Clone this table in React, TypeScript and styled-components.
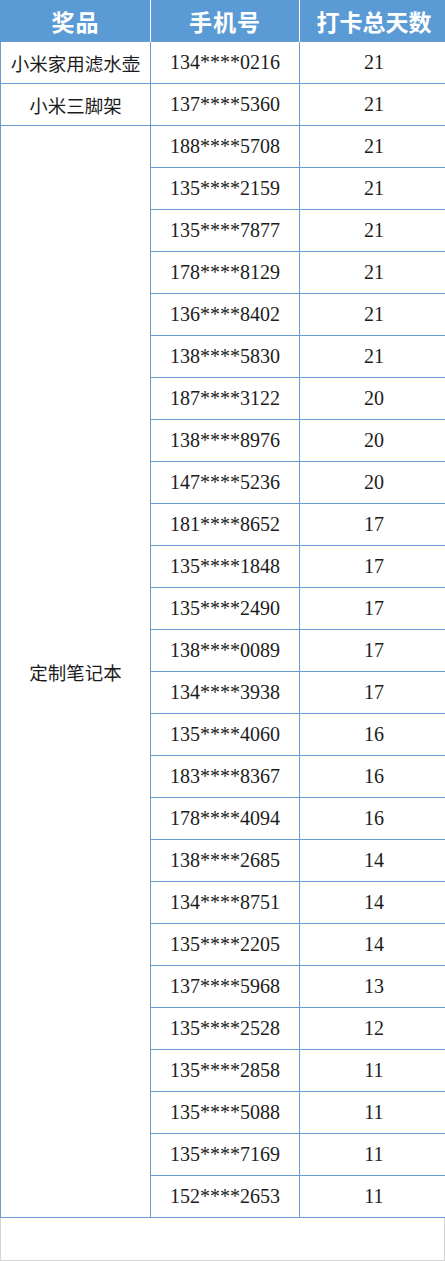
import React from "react";
import styled, { createGlobalStyle } from "styled-components";

type Winner = {
  phone: string;
  days: number;
};

type PrizeGroup = {
  prize: string;
  winners: Winner[];
};

const groups: PrizeGroup[] = [
  { prize: "小米家用滤水壶", winners: [{ phone: "134****0216", days: 21 }] },
  { prize: "小米三脚架", winners: [{ phone: "137****5360", days: 21 }] },
  {
    prize: "定制笔记本",
    winners: [
      { phone: "188****5708", days: 21 },
      { phone: "135****2159", days: 21 },
      { phone: "135****7877", days: 21 },
      { phone: "178****8129", days: 21 },
      { phone: "136****8402", days: 21 },
      { phone: "138****5830", days: 21 },
      { phone: "187****3122", days: 20 },
      { phone: "138****8976", days: 20 },
      { phone: "147****5236", days: 20 },
      { phone: "181****8652", days: 17 },
      { phone: "135****1848", days: 17 },
      { phone: "135****2490", days: 17 },
      { phone: "138****0089", days: 17 },
      { phone: "134****3938", days: 17 },
      { phone: "135****4060", days: 16 },
      { phone: "183****8367", days: 16 },
      { phone: "178****4094", days: 16 },
      { phone: "138****2685", days: 14 },
      { phone: "134****8751", days: 14 },
      { phone: "135****2205", days: 14 },
      { phone: "137****5968", days: 13 },
      { phone: "135****2528", days: 12 },
      { phone: "135****2858", days: 11 },
      { phone: "135****5088", days: 11 },
      { phone: "135****7169", days: 11 },
      { phone: "152****2653", days: 11 },
    ],
  },
];

const GlobalStyle = createGlobalStyle`
  html, body {
    margin: 0;
    padding: 0;
    background: #ffffff;
  }
`;

const Page = styled.div`
  width: 445px;
  height: 1261px;
  display: flex;
  flex-direction: column;
`;

const Table = styled.table`
  width: 445px;
  border-collapse: collapse;
  table-layout: fixed;
`;

const HeadCell = styled.th<{ $w: number }>`
  width: ${(p) => p.$w}px;
  height: 41px;
  padding: 0;
  background: #5b9bd5;
  color: #ffffff;
  font-family: "Noto Sans CJK SC", "Noto Sans", sans-serif;
  font-size: 23px;
  font-weight: 700;
  letter-spacing: 1px;
  text-align: center;
  vertical-align: middle;
  border-left: 1px solid #ffffff;
  border-right: 1px solid #ffffff;

  &:first-child {
    border-left: 1px solid #5b9bd5;
  }
  &:last-child {
    border-right: 1px solid #5b9bd5;
    letter-spacing: 0;
  }
`;

const Cell = styled.td<{ $num?: boolean }>`
  height: 41px;
  padding: 0;
  border: 1px solid #6a9ccf;
  text-align: center;
  vertical-align: middle;
  color: #1c1c1c;
  font-family: ${(p) =>
    p.$num
      ? `"Liberation Serif", "Noto Sans CJK SC", serif`
      : `"Noto Sans CJK SC", "Liberation Serif", serif`};
  font-size: ${(p) => (p.$num ? "20px" : "18.5px")};
  font-weight: 400;
  white-space: nowrap;
`;

const Blank = styled.div`
  flex: 1;
  border: 1px solid #d4d4d4;
  border-top: none;
`;

export default function App() {
  return (
    <>
      <GlobalStyle />
      <Page>
        <Table>
          <thead>
            <tr>
              <HeadCell $w={149}>奖品</HeadCell>
              <HeadCell $w={148}>手机号</HeadCell>
              <HeadCell $w={148}>打卡总天数</HeadCell>
            </tr>
          </thead>
          <tbody>
            {groups.map((g) =>
              g.winners.map((w, i) => (
                <tr key={w.phone}>
                  {i === 0 && <Cell rowSpan={g.winners.length}>{g.prize}</Cell>}
                  <Cell $num>{w.phone}</Cell>
                  <Cell $num>{w.days}</Cell>
                </tr>
              ))
            )}
          </tbody>
        </Table>
        <Blank />
      </Page>
    </>
  );
}
